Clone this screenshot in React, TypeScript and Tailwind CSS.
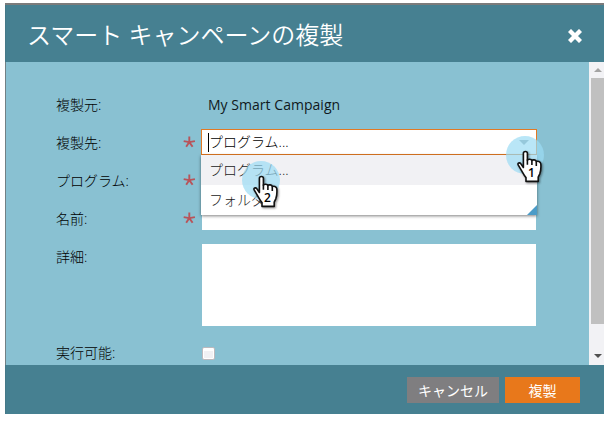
import type { ReactNode } from "react";

function Row({ label, required, className = "", children }: { label: string; required?: boolean; className?: string; children?: ReactNode }) {
  return (
    <div className={`flex ${className}`}>
      <span className="h-[28px] w-[125px] shrink-0 leading-[28px]">{label}</span>
      <span className="w-[20px] shrink-0 pt-[7px]">
        {required && (
          <svg width="13" height="13" viewBox="0 0 13 13" className="ml-[2px]" fill="none" stroke="#b8545a" strokeWidth="1.9">
            <path d="M6.3 6.1V.5M6.3 6.1.7 5.1M6.3 6.1l5.6-1M6.3 6.1 3.2 10.8M6.3 6.1 9.6 10.8" />
          </svg>
        )}
      </span>
      {children}
    </div>
  );
}

function Pointer({ step, className }: { step: string; className: string }) {
  return (
    <div className={`absolute h-[50px] w-[44px] ${className}`}>
      <svg width="44" height="50" viewBox="0 0 44 50">
        <circle cx="19" cy="19" r="19" fill="#9bdcf4" fillOpacity=".7" />
        <g className="drop-shadow-[1px_1px_1px_rgba(0,0,0,0.45)]" stroke="#111" strokeWidth="1.6" strokeLinejoin="round">
          <path
            d="M17.4 31.5V17.3c0-2.3 4-2.3 4 0v6.9c.6-1.5 4-1.3 4.5.4.8-1.2 4-1 4.4 1 1.3-.8 4.3-.2 4.5 2.2.3 3.6 0 7.4-1 10l-1.6 3.4v4.2H20v-3.8c-1.9-2-2.8-4-4-6.2l-3.7-6.2c-1.3-2.4 1.4-3 2.6-1.3z"
            fill="#fff"
          />
          <path d="M21.4 23.5v5.2M25.9 24.5v4.5M30.3 25.5v4.5" fill="none" />
        </g>
      </svg>
      <span className="absolute left-[20px] top-[29px] w-[11px] text-center font-['Open_Sans',sans-serif] text-[12px] font-semibold leading-[15px] text-black">{step}</span>
    </div>
  );
}

export default function App() {
  return (
    <div className="h-[421px] w-[612px] overflow-hidden bg-white pl-[5px] pt-[3px] font-['Open_Sans','Noto_Sans_CJK_JP',sans-serif] text-[14px] text-[#10191d]">
      <div className="relative flex h-[411px] w-[599px] flex-col border-t-2 border-[#7b7b7b] bg-[#468091]">
        <header className="flex h-[57px] shrink-0 items-center justify-between border-l border-[#457887] pl-[21px] pr-[22px] text-white">
          <h1 className="whitespace-nowrap pt-[2px] text-[24px] font-[350] leading-[36px]">スマート キャンペーンの複製</h1>
          <svg width="14" height="14" viewBox="0 0 14 14" className="mt-[5px]" stroke="#fff" strokeWidth="4.3" strokeLinecap="square">
            <path d="m3 3 8 8M11 3l-8 8" />
          </svg>
        </header>

        <main className="flex h-[303px] shrink-0 overflow-hidden border-l border-[#718084] bg-[#89c1d2]">
          <div className="w-[583px] pl-[50px] pt-[29px] font-light text-black">
            <Row label="複製元:" className="h-[38px]">
              <span className="pl-[7px] font-normal leading-[28px] tracking-[0.03px] text-[#10191d]">My Smart Campaign</span>
            </Row>
            <Row label="複製先:" required className="h-[38px]">
              <div className="relative h-[26px] w-[336px] border border-[#e27923] bg-white">
                <div className="flex h-full items-center pl-[6px]">
                  <span className="h-[19px] w-px bg-black" />
                  <span className="pb-[2px]">プログラム...</span>
                  <span className="ml-auto mr-[7px] h-0 w-0 border-x-[5px] border-t-[5px] border-x-transparent border-t-[#8a9ba2]" />
                </div>
                <ul className="absolute -left-px top-[25px] z-10 h-[60px] w-[336px] bg-white text-[#222] shadow-[0_1px_3px_rgba(0,0,0,0.5)]">
                  <li className="h-[30px] bg-[#f1f1f4] pl-[8px] leading-[29px]">プログラム...</li>
                  <li className="h-[30px] pl-[8px] leading-[29px]">フォルダ</li>
                  <li className="absolute bottom-0 right-0 h-0 w-0 border-b-[10px] border-l-[10px] border-b-[#4b9cc8] border-l-transparent" />
                </ul>
              </div>
            </Row>
            <Row label="プログラム:" required className="h-[38px]">
              <div className="ml-px h-[25px] w-[334px] bg-white" />
            </Row>
            <Row label="名前:" required className="h-[38px]">
              <div className="ml-px h-[25px] w-[334px] bg-white" />
            </Row>
            <Row label="詳細:" className="h-[96px]">
              <div className="ml-px mt-px h-[82px] w-[334px] bg-white" />
            </Row>
            <Row label="実行可能:">
              <span className="ml-px mt-[8px] h-[13px] w-[13px] rounded-[2px] border border-[#bcb9bd] bg-[#f1f1f4] shadow-[inset_0_3px_0_white,inset_0_0_0_1px_white]" />
            </Row>
          </div>
          <div className="flex w-[15px] flex-col items-end bg-[#f2f2f5]">
            <div className="flex h-[16px] w-[13px] items-center justify-center">
              <span className="h-0 w-0 border-x-4 border-b-4 border-x-transparent border-b-[#a3a3a3]" />
            </div>
            <div className="h-[246px] w-[13px] bg-[#c0c0c0]" />
            <div className="flex w-[13px] justify-center pt-[30px]">
              <span className="h-0 w-0 border-x-4 border-t-4 border-x-transparent border-t-[#505050]" />
            </div>
          </div>
        </main>

        <footer className="flex h-[49px] shrink-0 justify-end gap-[6px] border-l border-[#457887] pr-[24px] pt-[12px] text-white">
          <button className="h-[26px] w-[92px] bg-[#7f7e80] leading-[25px]">キャンセル</button>
          <button className="h-[26px] w-[75px] bg-[#e8781b] leading-[25px]">複製</button>
        </footer>

        <Pointer step="1" className="left-[501px] top-[131px] z-20" />
        <Pointer step="2" className="left-[237px] top-[156px] z-20" />
      </div>
    </div>
  );
}
